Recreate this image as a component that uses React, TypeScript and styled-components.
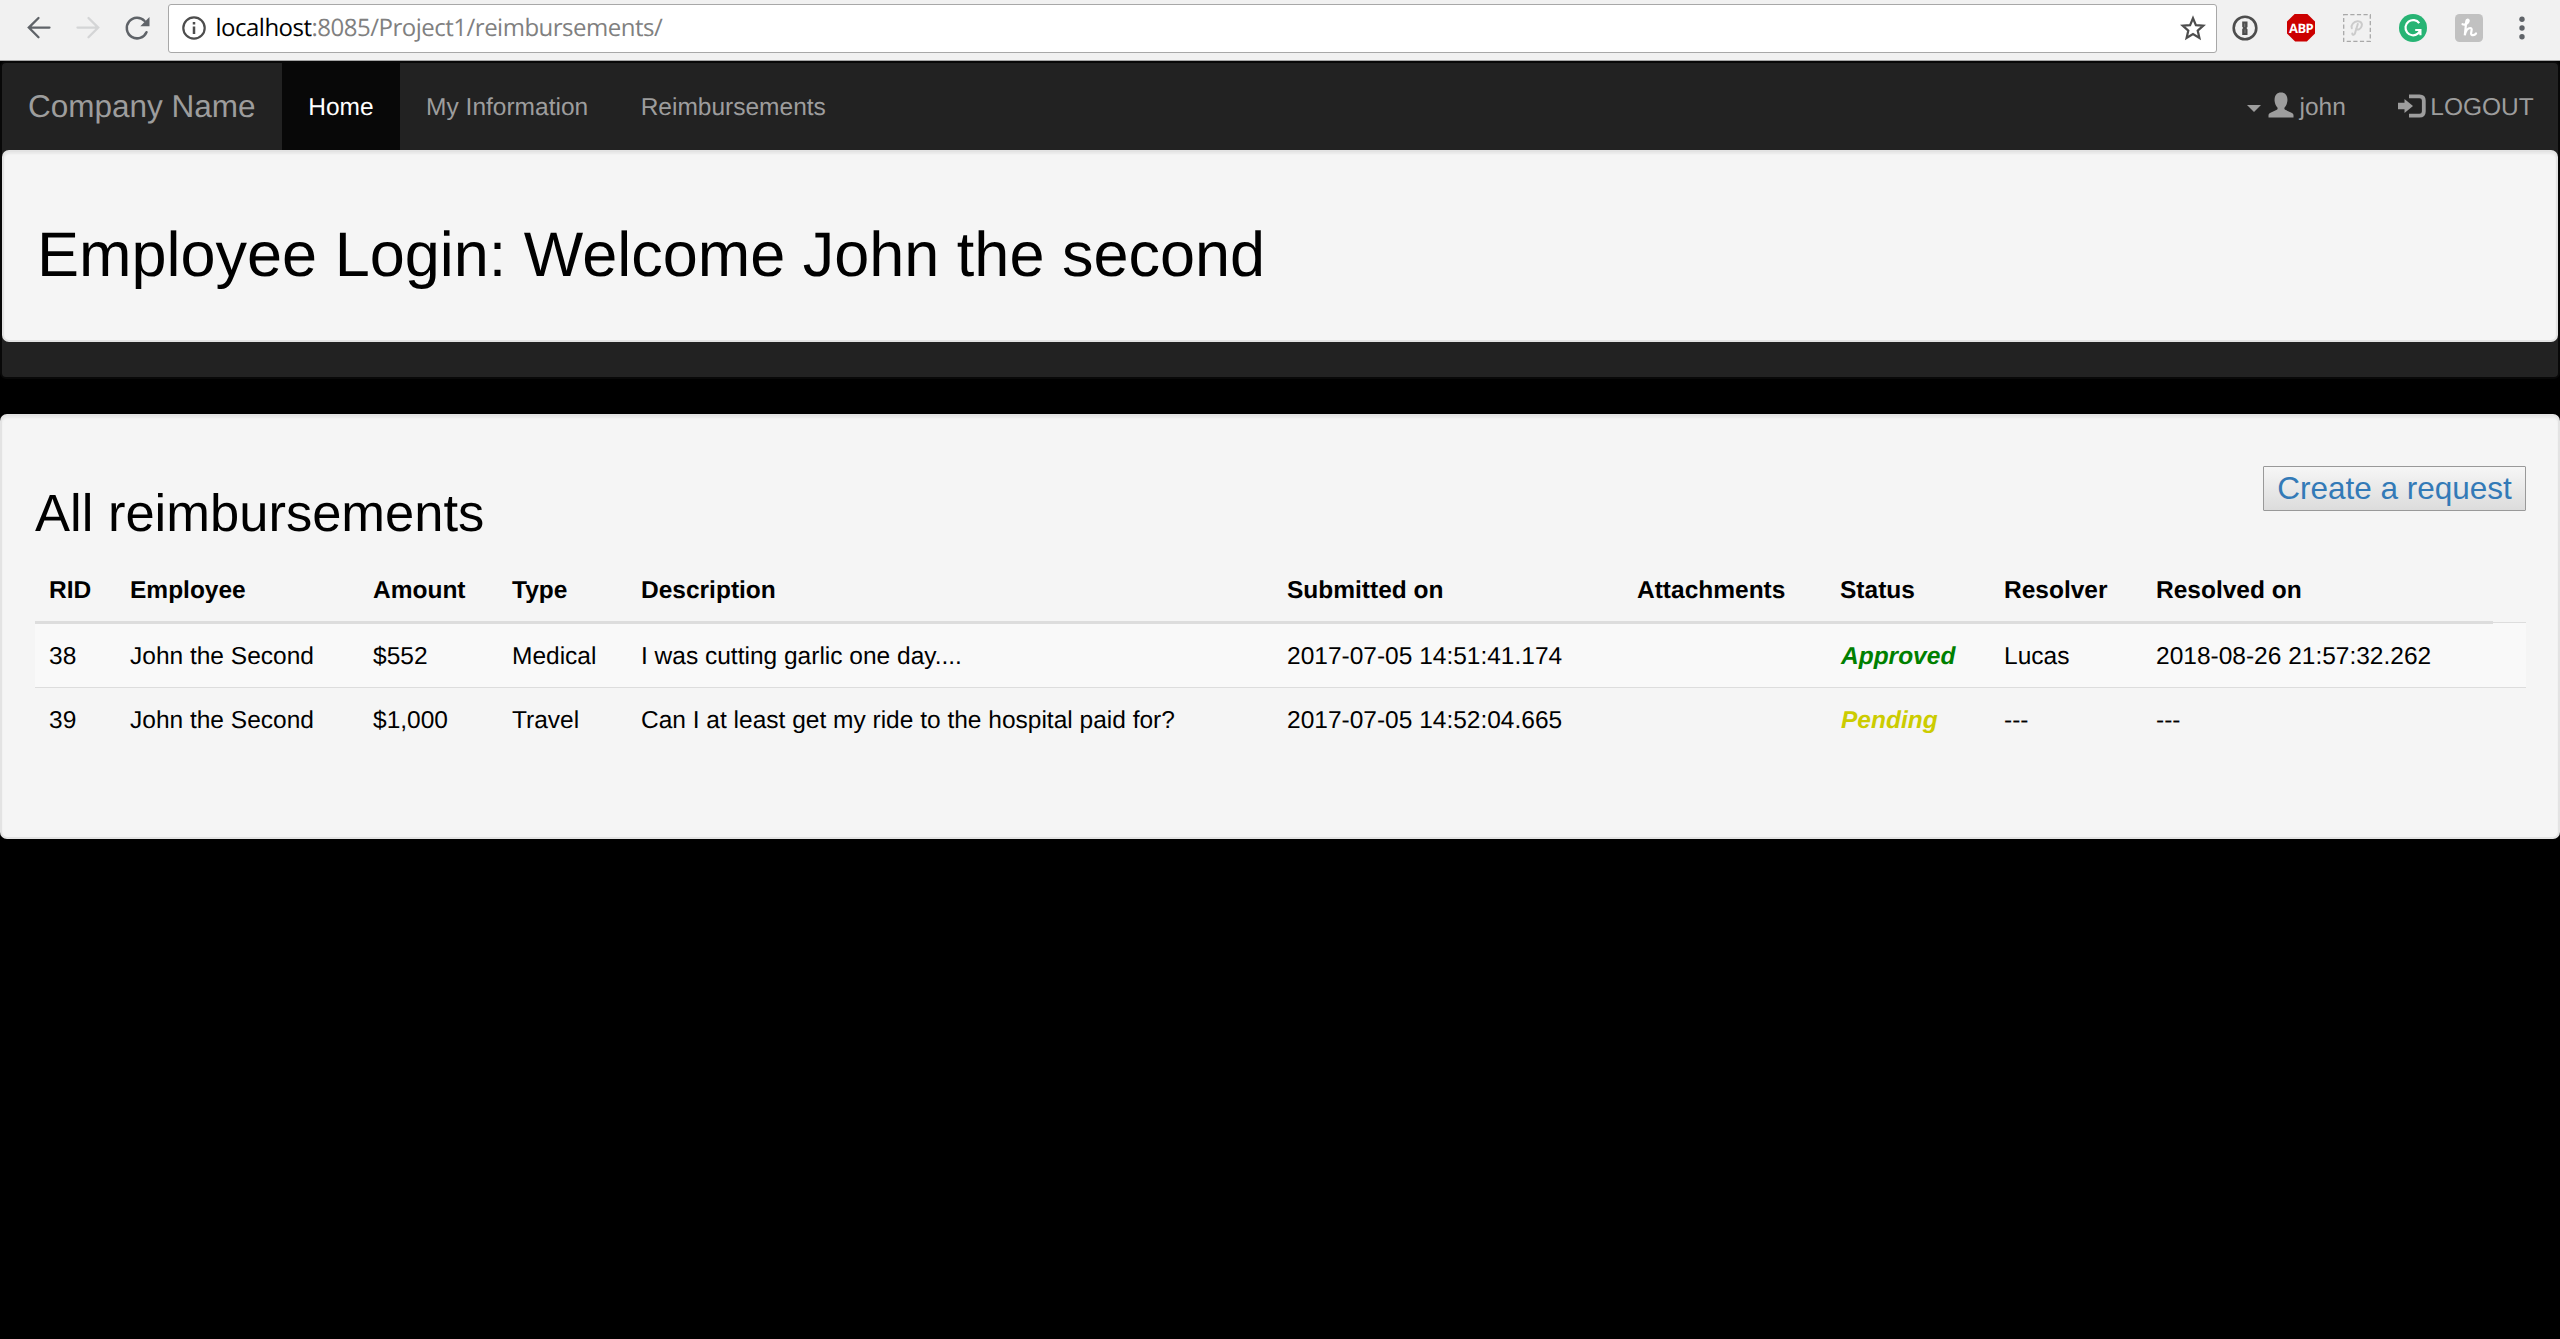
import React from "react";
import styled, { createGlobalStyle } from "styled-components";

const GlobalStyle = createGlobalStyle`
  *, *::before, *::after { box-sizing: border-box; }
  body {
    margin: 0;
    background: #000;
    color: #000;
    font-family: "Liberation Sans", Arial, sans-serif;
    font-size: 24.5px;
    line-height: 35px;
    text-rendering: geometricPrecision;
  }
`;

const Toolbar = styled.header`
  display: flex;
  align-items: center;
  height: 61px;
  padding-bottom: 5px;
  background: #f1f1f1;
  border-bottom: 1px solid #a5a5a5;
`;

const ToolButtons = styled.div`
  display: flex;
  align-items: center;
  gap: 17px;
  padding-left: 23px;
  width: 168px;
  flex: none;
`;

const AddressBar = styled.div`
  display: flex;
  align-items: center;
  width: 2049px;
  height: 49px;
  margin-top: 1px;
  padding: 0 10px 0 12px;
  background: #fff;
  border: 1px solid #a8a8a8;
  border-radius: 3px;
`;

const Url = styled.span`
  flex: 1;
  margin-left: 8.5px;
  font-family: "Open Sans", "Noto Sans", sans-serif;
  font-size: 24px;
  letter-spacing: -0.5px;
  line-height: 34px;
  color: #808080;
`;

const Host = styled.span`
  color: #000;
`;

const Extensions = styled.div`
  display: flex;
  align-items: center;
  gap: 28px;
  padding-left: 14px;
`;

const AbpBadge = styled.span`
  display: flex;
  align-items: center;
  justify-content: center;
  width: 28px;
  height: 28px;
  background: #cc0000;
  clip-path: polygon(29% 0, 71% 0, 100% 29%, 100% 71%, 71% 100%, 29% 100%, 0 71%, 0 29%);
  color: #fff;
  font: 700 13px/18px "Open Sans", sans-serif;
  letter-spacing: -0.7px;
`;

const NavPanel = styled.nav`
  height: 318px;
  border: 2px solid #080808;
  border-radius: 6px;
  background: #222;
  margin-bottom: 35px;
`;

const NavRow = styled.div`
  display: flex;
  align-items: stretch;
  height: 87px;
`;

const Brand = styled.a`
  display: flex;
  align-items: center;
  width: 280px;
  padding-left: 26px;
  font-size: 31.5px;
  color: #9d9d9d;
`;

const NavLink = styled.a<{ $active?: boolean }>`
  display: flex;
  align-items: center;
  padding: 2px 26.25px 0;
  color: ${(p) => (p.$active ? "#fff" : "#9d9d9d")};
  background: ${(p) => (p.$active ? "#080808" : "transparent")};
`;

const AccountLinks = styled.div`
  display: flex;
  align-items: stretch;
  margin-left: auto;
  margin-right: -2px;
`;

const Caret = styled.span`
  border: 7px solid transparent;
  border-top-color: #9d9d9d;
  border-bottom: 0;
  margin-right: 7px;
  margin-top: 2px;
`;

const Well = styled.section<{ $tall?: boolean }>`
  height: ${(p) => (p.$tall ? "425px" : "192px")};
  padding: 33px;
  background: #f5f5f5;
  border: 2px solid #e3e3e3;
  border-radius: 7px;
  box-shadow: inset 0 2px 2px rgba(0, 0, 0, 0.05);
`;

const PageTitle = styled.h1`
  margin: 36px 0 0;
  font-size: 63px;
  font-weight: 400;
  line-height: 69px;
`;

const SectionHead = styled.div`
  display: flex;
  justify-content: space-between;
  align-items: flex-start;
  height: 109px;
  padding-top: 17px;
  margin-right: -1px;
`;

const SectionTitle = styled.h2`
  margin: 19px 0 0;
  font-size: 52.5px;
  font-weight: 400;
  line-height: 58px;
`;

const RequestButton = styled.button`
  height: 45px;
  width: 263px;
  padding: 0;
  border: 1px solid #999;
  border-radius: 1px;
  background: linear-gradient(#f6f6f6, #dcdcdc);
  color: #337ab7;
  font: 31.5px/43px "Liberation Sans", Arial, sans-serif;
`;

const Table = styled.table`
  width: 2491px;
  table-layout: fixed;
  border-collapse: collapse;
  border-spacing: 0;
`;

const HeadCell = styled.th`
  padding: 15px 14px 13px;
  text-align: left;
  white-space: nowrap;
  border-bottom: 3px solid #ddd;
`;

const BodyRow = styled.tr<{ $striped: boolean }>`
  height: 64px;
  background: ${(p) => (p.$striped ? "#f9f9f9" : "transparent")};
`;

const Cell = styled.td`
  padding: 15px 14px 13px;
  white-space: nowrap;
  border-top: 1px solid #ddd;
`;

const Status = styled.em<{ $color: string }>`
  margin-left: 1px;
  font-weight: 700;
  color: ${(p) => p.$color};
`;

const columns: [string, number][] = [
  ["RID", 81],
  ["Employee", 243],
  ["Amount", 139],
  ["Type", 129],
  ["Description", 646],
  ["Submitted on", 350],
  ["Attachments", 203],
  ["Status", 164],
  ["Resolver", 152],
  ["Resolved on", 351],
];

const rows = [
  {
    id: "38",
    employee: "John the Second",
    amount: "$552",
    type: "Medical",
    description: "I was cutting garlic one day....",
    submitted: "2017-07-05 14:51:41.174",
    status: "Approved",
    color: "#008000",
    resolver: "Lucas",
    resolved: "2018-08-26 21:57:32.262",
  },
  {
    id: "39",
    employee: "John the Second",
    amount: "$1,000",
    type: "Travel",
    description: "Can I at least get my ride to the hospital paid for?",
    submitted: "2017-07-05 14:52:04.665",
    status: "Pending",
    color: "#cccc00",
    resolver: "---",
    resolved: "---",
  },
];

const BackIcon = () => (
  <svg width="32" height="32" viewBox="0 0 32 32" fill="none" stroke="#5f6368" strokeWidth="2.3" strokeLinecap="round">
    <path d="M26.5 15.6H6M15.5 6 5.8 15.6l9.7 9.6" />
  </svg>
);

const ForwardIcon = () => (
  <svg width="32" height="32" viewBox="0 0 32 32" fill="none" stroke="#d4d5d6" strokeWidth="2.3" strokeLinecap="round">
    <path d="M5.5 15.6H26M16.5 6l9.7 9.6-9.7 9.6" />
  </svg>
);

const ReloadIcon = () => (
  <svg width="32" height="32" viewBox="0 0 32 32" fill="none">
    <path d="M25.5 20.2A10.3 10.3 0 1 1 23.6 9" stroke="#5f6368" strokeWidth="2.5" strokeLinecap="round" />
    <path d="M28.5 5v9.2h-9.2z" fill="#5f6368" />
  </svg>
);

const InfoIcon = () => (
  <svg width="26" height="26" viewBox="0 0 26 26" fill="none">
    <circle cx="13" cy="13" r="10.7" stroke="#4d4d4d" strokeWidth="2.2" />
    <path d="M13 11.5v7.5M13 7v2.6" stroke="#4d4d4d" strokeWidth="2.5" />
  </svg>
);

const StarIcon = () => (
  <svg width="26" height="26" viewBox="0 0 26 26" fill="none">
    <path
      d="M13 3.2l2.9 6.9 7.4.6-5.6 4.9 1.7 7.3L13 19l-6.4 3.9 1.7-7.3-5.6-4.9 7.4-.6z"
      stroke="#4d4d4d"
      strokeWidth="2.2"
    />
  </svg>
);

const KeyholeIcon = () => (
  <svg width="28" height="28" viewBox="0 0 28 28" fill="none">
    <circle cx="14" cy="14" r="11.3" stroke="#4d4d4d" strokeWidth="2.6" />
    <path d="M11.2 7.5h5.3v5.5l-1 1 1 1.2v5.8h-5.300v-6l1-1-1-1.2z" fill="#4d4d4d" />
    <path d="M13.7 9.5v3.5M14 15.5v3.5" stroke="#8a8a8a" strokeWidth=".8" />
  </svg>
);

const PinIcon = () => (
  <svg width="28" height="28" viewBox="0 0 28 28" fill="none">
    <rect x=".7" y=".7" width="26.6" height="26.6" stroke="#a8a8a8" strokeWidth="1.3" strokeDasharray="4.2 2.4" />
    <path
      d="M8.8 14.2C7.5 11 11 7.5 14.5 7.2c3.2-.2 5 2 4.2 4.800-.8 2.900-3.500 4.300-5.700 3M14.800 10c-.8 3-2 6-2.700 9-.5 2.300-2.800 2.300-2.800.4"
      stroke="#cbcbcb"
      strokeWidth="2"
      strokeLinecap="round"
    />
  </svg>
);

const GrammarlyIcon = () => (
  <svg width="28" height="28" viewBox="0 0 28 28" fill="none">
    <circle cx="14" cy="14" r="14" fill="#27b474" />
    <path d="M20.2 9.2A7.6 7.6 0 1 0 18.8 19.7L21 17M16.2 16h5.2v5.2" stroke="#fff" strokeWidth="2.2" />
  </svg>
);

const HoneyIcon = () => (
  <svg width="28" height="28" viewBox="0 0 28 28" fill="none">
    <rect width="28" height="28" rx="4.5" fill="#c1c1c1" />
    <path
      d="M7.500 10.200c2.300 1 6-.7 6.200-3.200.1-1.800-2.100-1.700-2.400.2L9.800 21.300c1-4.500 3.200-7.300 5.500-7.300 2.600 0 .7 3.700.8 5.700.1 2.200 3.400 1.800 4.900-.2"
      stroke="#fff"
      strokeWidth="2.2"
      strokeLinecap="round"
    />
  </svg>
);

const MenuIcon = () => (
  <svg width="28" height="28" viewBox="0 0 28 28" fill="#5f6368">
    <circle cx="11" cy="5.3" r="2.7" />
    <circle cx="11" cy="14" r="2.7" />
    <circle cx="11" cy="22.7" r="2.7" />
  </svg>
);

const UserGlyph = styled.svg`
  margin-right: 5px;
  margin-top: -6px;
`;

const UserIcon = () => (
  <UserGlyph width="26" height="26" viewBox="0 0 26 26" fill="#9d9d9d">
    <path d="M.5 25.5v-2.300c0-1.200.8-2 2-2.500l6.300-2.900c.9-.5 1-1.200.6-2.200C8 14 6.800 11.500 6.600 9 6.200 3.500 8.600.5 13 .5s6.800 3 6.400 8.500c-.2 2.500-1.400 5-2.800 6.600-.4 1-.3 1.700.6 2.200l6.300 2.900c1.200.5 2 1.300 2 2.500v2.300z" />
  </UserGlyph>
);

const LoginGlyph = styled.svg`
  margin-right: 4px;
  margin-top: -4px;
`;

const LoginIcon = () => (
  <LoginGlyph width="28" height="24" viewBox="0 0 28 24" fill="none">
    <path d="M0 8.7h6.500V5l8.500 7-8.500 7v-3.700H0z" fill="#9d9d9d" />
    <path d="M11 2.300h10.500c3 0 4.300 1.400 4.300 4.200v11c0 2.800-1.300 4.200-4.300 4.200H11" stroke="#9d9d9d" strokeWidth="3.8" />
  </LoginGlyph>
);

export default function App() {
  return (
    <>
      <GlobalStyle />
      <Toolbar>
        <ToolButtons>
          <BackIcon />
          <ForwardIcon />
          <ReloadIcon />
        </ToolButtons>
        <AddressBar>
          <InfoIcon />
          <Url>
            <Host>localhost</Host>:8085/Project1/reimbursements/
          </Url>
          <StarIcon />
        </AddressBar>
        <Extensions>
          <KeyholeIcon />
          <AbpBadge>ABP</AbpBadge>
          <PinIcon />
          <GrammarlyIcon />
          <HoneyIcon />
          <MenuIcon />
        </Extensions>
      </Toolbar>
      <NavPanel>
        <NavRow>
          <Brand>Company Name</Brand>
          <NavLink $active>Home</NavLink>
          <NavLink>My Information</NavLink>
          <NavLink>Reimbursements</NavLink>
          <AccountLinks>
            <NavLink>
              <Caret />
              <UserIcon />
              john
            </NavLink>
            <NavLink>
              <LoginIcon />
              LOGOUT
            </NavLink>
          </AccountLinks>
        </NavRow>
        <Well>
          <PageTitle>Employee Login: Welcome John the second</PageTitle>
        </Well>
      </NavPanel>
      <Well $tall>
        <SectionHead>
          <SectionTitle>All reimbursements</SectionTitle>
          <RequestButton>Create a request</RequestButton>
        </SectionHead>
        <Table>
          <colgroup>
            {columns.map(([label, width]) => (
              <col key={label} style={{ width }} />
            ))}
            <col />
          </colgroup>
          <thead>
            <tr>
              {columns.map(([label]) => (
                <HeadCell key={label}>{label}</HeadCell>
              ))}
            </tr>
          </thead>
          <tbody>
            {rows.map((row, i) => (
              <BodyRow key={row.id} $striped={i % 2 === 0}>
                <Cell>{row.id}</Cell>
                <Cell>{row.employee}</Cell>
                <Cell>{row.amount}</Cell>
                <Cell>{row.type}</Cell>
                <Cell>{row.description}</Cell>
                <Cell>{row.submitted}</Cell>
                <Cell />
                <Cell>
                  <Status $color={row.color}>{row.status}</Status>
                </Cell>
                <Cell>{row.resolver}</Cell>
                <Cell>{row.resolved}</Cell>
                <Cell />
              </BodyRow>
            ))}
          </tbody>
        </Table>
      </Well>
    </>
  );
}
